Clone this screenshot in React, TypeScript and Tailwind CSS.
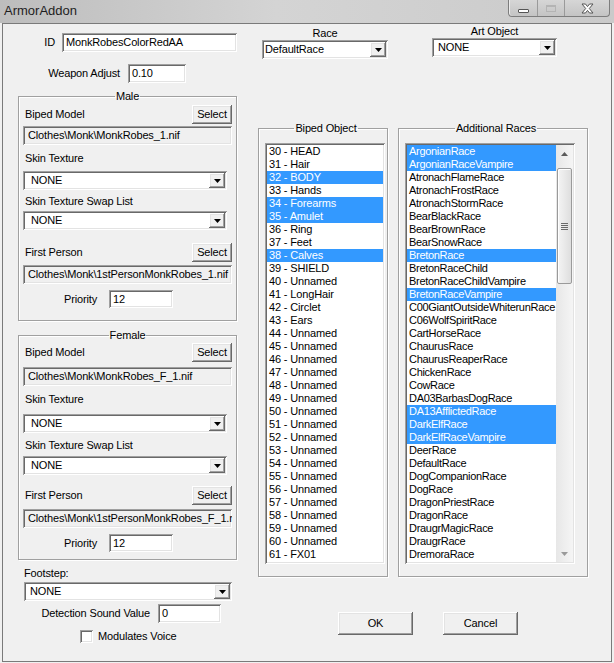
import React from "react";

const sunken =
  "shadow-[inset_1px_1px_0_#a0a0a0,inset_-1px_-1px_0_#ffffff,inset_2px_2px_0_#696969,inset_-2px_-2px_0_#e3e3e3]";
const raised =
  "shadow-[inset_-1px_-1px_0_#696969,inset_1px_1px_0_#ffffff,inset_-2px_-2px_0_#a0a0a0,inset_2px_2px_0_#e3e3e3]";

const bipedParts = [
  "HEAD", "Hair", "BODY", "Hands", "Forearms", "Amulet", "Ring", "Feet", "Calves", "SHIELD",
  "Unnamed", "LongHair", "Circlet", "Ears",
];
const bipedItems = Array.from({ length: 32 }, (_, i) => {
  const n = 30 + i;
  const name = n === 61 ? "FX01" : bipedParts[i] ?? "Unnamed";
  return `${n} - ${name}`;
});
const bipedSel = [2, 4, 5, 8];

const races = [
  "ArgonianRace", "ArgonianRaceVampire", "AtronachFlameRace", "AtronachFrostRace",
  "AtronachStormRace", "BearBlackRace", "BearBrownRace", "BearSnowRace", "BretonRace",
  "BretonRaceChild", "BretonRaceChildVampire", "BretonRaceVampire",
  "C00GiantOutsideWhiterunRace", "C06WolfSpiritRace", "CartHorseRace", "ChaurusRace",
  "ChaurusReaperRace", "ChickenRace", "CowRace", "DA03BarbasDogRace", "DA13AfflictedRace",
  "DarkElfRace", "DarkElfRaceVampire", "DeerRace", "DefaultRace", "DogCompanionRace",
  "DogRace", "DragonPriestRace", "DragonRace", "DraugrMagicRace", "DraugrRace", "DremoraRace",
];
const raceSel = [0, 1, 8, 11, 20, 21, 22];

function Edit({ value, className = "", gray = false }: { value: string; className?: string; gray?: boolean }) {
  return (
    <div
      className={`flex items-center overflow-hidden whitespace-nowrap ${gray ? "bg-[#f0f0f0] pl-[5px]" : "bg-white pl-[4px]"} ${sunken} ${className}`}
    >
      {value}
    </div>
  );
}

function Combo({ value, className = "", indent = "pl-[8px]" }: { value: string; className?: string; indent?: string }) {
  return (
    <div className={`flex h-[19px] items-center bg-white ${sunken} ${className}`}>
      <span className={`flex-1 truncate ${indent}`}>{value}</span>
      <span className={`mr-[2px] flex h-[15px] w-[16px] items-center justify-center bg-[#f0f0f0] ${raised}`}>
        <svg width="7" height="4" viewBox="0 0 7 4">
          <path d="M0 0h7L3.5 4z" fill="#000" />
        </svg>
      </span>
    </div>
  );
}

function Button({ label, className = "" }: { label: string; className?: string }) {
  return (
    <div className={`flex items-center justify-center bg-[#f0f0f0] ${raised} ${className}`}>{label}</div>
  );
}

type Sp = {
  r1: string; p1: string; l1: string; c1: string; l2: string;
  c2: string; r2: string; p2: string; pr: string; pb: string;
};

const maleSp: Sp = {
  r1: "mt-[2px]", p1: "mt-[2px]", l1: "mt-[7px]", c1: "mt-[6px]", l2: "mt-[5px]",
  c2: "mt-[3px]", r2: "mt-[13px]", p2: "mt-[3px]", pr: "mt-[6px]", pb: "pb-[12px]",
};
const femaleSp: Sp = {
  r1: "mt-[1px]", p1: "mt-[5px]", l1: "mt-[7px]", c1: "mt-[8px]", l2: "mt-[6px]",
  c2: "mt-[4px]", r2: "mt-[11px]", p2: "mt-[4px]", pr: "mt-[6px]", pb: "pb-[7px]",
};

function Group({ title, model, first, sp, className }: { title: string; model: string; first: string; sp: Sp; className: string }) {
  return (
    <fieldset
      className={`border border-[#a0a0a0] pl-[4px] pr-[4px] shadow-[inset_1px_1px_0_#ffffff,1px_1px_0_#ffffff] ${sp.pb} ${className}`}
    >
      <legend className="mx-auto px-[1px] leading-[13px]">{title}</legend>
      <div className={`flex h-[19px] items-center justify-between ${sp.r1}`}>
        <span className="pl-[2px]">Biped Model</span>
        <Button label="Select" className="h-[19px] w-[40px]" />
      </div>
      <Edit gray value={model} className={`h-[19px] w-[209px] ${sp.p1}`} />
      <div className={`h-[13px] pl-[2px] leading-[13px] ${sp.l1}`}>Skin Texture</div>
      <Combo value="NONE" className={`w-[204px] ${sp.c1}`} />
      <div className={`h-[13px] pl-[2px] leading-[13px] ${sp.l2}`}>Skin Texture Swap List</div>
      <Combo value="NONE" className={`w-[204px] ${sp.c2}`} />
      <div className={`flex h-[19px] items-center justify-between ${sp.r2}`}>
        <span className="pl-[2px]">First Person</span>
        <Button label="Select" className="h-[19px] w-[40px]" />
      </div>
      <Edit gray value={first} className={`h-[19px] w-[209px] ${sp.p2}`} />
      <div className={`flex h-[18px] items-center ${sp.pr}`}>
        <span className="w-[74px] text-right">Priority</span>
        <Edit value="12" className="ml-[12px] h-[18px] w-[64px]" />
      </div>
    </fieldset>
  );
}

function ListItem({ text, sel }: { text: string; sel: boolean }) {
  return (
    <div
      className={`h-[13px] overflow-hidden whitespace-nowrap pl-[2px] leading-[13px] ${sel ? "bg-[#3399ff] text-white" : ""}`}
    >
      {text}
    </div>
  );
}

function Scrollbar() {
  return (
    <div className="flex w-[17px] flex-col bg-[linear-gradient(to_right,#e7e7e7,#f5f5f5)]">
      <div className="flex h-[17px] items-center justify-center">
        <svg width="7" height="4" viewBox="0 0 7 4">
          <path d="M0 4h7L3.5 0z" fill="#5a5a5a" />
        </svg>
      </div>
      <div className="mx-[1px] mt-[6px] flex h-[116px] items-center justify-center rounded-[2px] border border-[#9a9a9a] bg-[linear-gradient(to_right,#f4f4f4,#dedede)] shadow-[inset_1px_1px_0_#ffffff]">
        <div className="flex flex-col gap-[1px]">
          <div className="h-[1px] w-[7px] bg-[#6a6a6a]" />
          <div className="h-[1px] w-[7px] bg-[#6a6a6a]" />
          <div className="h-[1px] w-[7px] bg-[#6a6a6a]" />
          <div className="h-[1px] w-[7px] bg-[#6a6a6a]" />
        </div>
      </div>
      <div className="flex-1" />
      <div className="flex h-[17px] items-center justify-center">
        <svg width="7" height="4" viewBox="0 0 7 4">
          <path d="M0 0h7L3.5 4z" fill="#9a9a9a" />
        </svg>
      </div>
    </div>
  );
}

function TitleButtons() {
  return (
    <div className="mr-[4px] flex h-[17px] rounded-b-[4px] border border-t-0 border-[#7d7d7d] bg-[linear-gradient(to_bottom,#d6d6d6,#c4c4c4)] shadow-[inset_1px_0_0_#ececec]">
      <div className="flex w-[29px] items-center justify-center border-r border-[#9a9a9a]">
        <div className="mt-[5px] h-[4px] w-[11px] rounded-[1px] border border-[#555] bg-white" />
      </div>
      <div className="flex w-[27px] items-center justify-center border-r border-[#9a9a9a]">
        <div className="h-[7px] w-[10px] border border-[#b4b4b4] border-t-2" />
      </div>
      <div className="flex w-[44px] items-center justify-center">
        <svg width="13" height="11" viewBox="0 0 13 11">
          <path
            d="M1 1h3.5l2 2.6L8.5 1H12L8.3 5.5 12 10H8.5l-2-2.6L4.5 10H1l3.7-4.5z"
            fill="#fff"
            stroke="#555"
            strokeWidth="1"
          />
        </svg>
      </div>
    </div>
  );
}

export default function App() {
  return (
    <div className="h-[663px] w-[614px] overflow-hidden bg-[#f0f0f0] font-['Liberation_Sans',Arial,sans-serif] text-[11px] tracking-[-0.15px] text-black">
      <div className="flex h-[23px] items-start justify-between bg-[linear-gradient(to_right,#bdbdbd,#d4d4d4_45%,#cacaca)]">
        <span className="pl-[4px] pt-[3px] text-[13px] leading-[16px] tracking-normal text-[#1e1e1e]">ArmorAddon</span>
        <TitleButtons />
      </div>
      <div className="ml-[2px] flex h-[639px] w-[610px] border border-[#7a7a7a] pl-[15px]">
        <div className="flex w-[219px] flex-col">
          <div className="mt-[9px] flex h-[19px] items-center">
            <span className="w-[37px] text-right">ID</span>
            <Edit value="MonkRobesColorRedAA" className="ml-[7px] h-[19px] w-[175px]" />
          </div>
          <div className="mt-[12px] flex h-[19px] items-center">
            <span className="w-[102px] text-right">Weapon Adjust</span>
            <Edit value="0.10" className="ml-[8px] h-[19px] w-[58px]" />
          </div>
          <Group
            title="Male"
            model="Clothes\Monk\MonkRobes_1.nif"
            first="Clothes\Monk\1stPersonMonkRobes_1.nif"
            sp={maleSp}
            className="mt-[7px]"
          />
          <Group
            title="Female"
            model="Clothes\Monk\MonkRobes_F_1.nif"
            first="Clothes\Monk\1stPersonMonkRobes_F_1.nif"
            sp={femaleSp}
            className="mt-[8px]"
          />
          <div className="mt-[7px] h-[13px] pl-[6px] leading-[13px]">Footstep:</div>
          <Combo value="NONE" className="ml-[6px] mt-[2px] w-[208px]" indent="pl-[6px]" />
          <div className="mt-[3px] flex h-[19px] items-center">
            <span className="w-[132px] text-right">Detection Sound Value</span>
            <Edit value="0" className="ml-[8px] h-[19px] w-[63px]" />
          </div>
          <div className="mt-[7px] flex h-[13px] items-center">
            <div className={`ml-[62px] h-[13px] w-[13px] bg-white ${sunken}`} />
            <span className="ml-[5px]">Modulates Voice</span>
          </div>
        </div>

        <div className="ml-[21px] flex flex-col">
          <div className="flex items-start">
            <div className="ml-[4px] mt-[3px] flex w-[126px] flex-col">
              <div className="h-[13px] text-center leading-[13px]">Race</div>
              <Combo value="DefaultRace" indent="pl-[3px]" />
            </div>
            <div className="ml-[44px] mt-[1px] flex w-[125px] flex-col">
              <div className="h-[13px] text-center leading-[13px]">Art Object</div>
              <Combo value="NONE" indent="pl-[6px]" />
            </div>
          </div>

          <div className="mt-[63px] flex items-start">
            <fieldset className="w-[130px] border border-[#a0a0a0] pb-[12px] pl-[6px] shadow-[inset_1px_1px_0_#ffffff,1px_1px_0_#ffffff]">
              <legend className="mx-auto px-[1px] leading-[13px]">Biped Object</legend>
              <div className={`mt-[8px] h-[421px] w-[120px] overflow-hidden bg-white p-[2px] ${sunken}`}>
                {bipedItems.map((t, i) => (
                  <ListItem key={t} text={t} sel={bipedSel.includes(i)} />
                ))}
              </div>
            </fieldset>
            <fieldset className="ml-[10px] w-[190px] border border-[#a0a0a0] pb-[12px] pl-[6px] shadow-[inset_1px_1px_0_#ffffff,1px_1px_0_#ffffff]">
              <legend className="mx-auto px-[1px] leading-[13px]">Additional Races</legend>
              <div className={`mt-[8px] flex h-[421px] w-[170px] overflow-hidden bg-white p-[2px] ${sunken}`}>
                <div className="min-w-0 flex-1 overflow-hidden tracking-[-0.3px]">
                  {races.map((t, i) => (
                    <ListItem key={t} text={t} sel={raceSel.includes(i)} />
                  ))}
                </div>
                <Scrollbar />
              </div>
            </fieldset>
          </div>

          <div className="mt-[35px] flex">
            <Button label="OK" className="ml-[80px] h-[23px] w-[75px]" />
            <Button label="Cancel" className="ml-[30px] h-[23px] w-[75px]" />
          </div>
        </div>
      </div>
    </div>
  );
}
